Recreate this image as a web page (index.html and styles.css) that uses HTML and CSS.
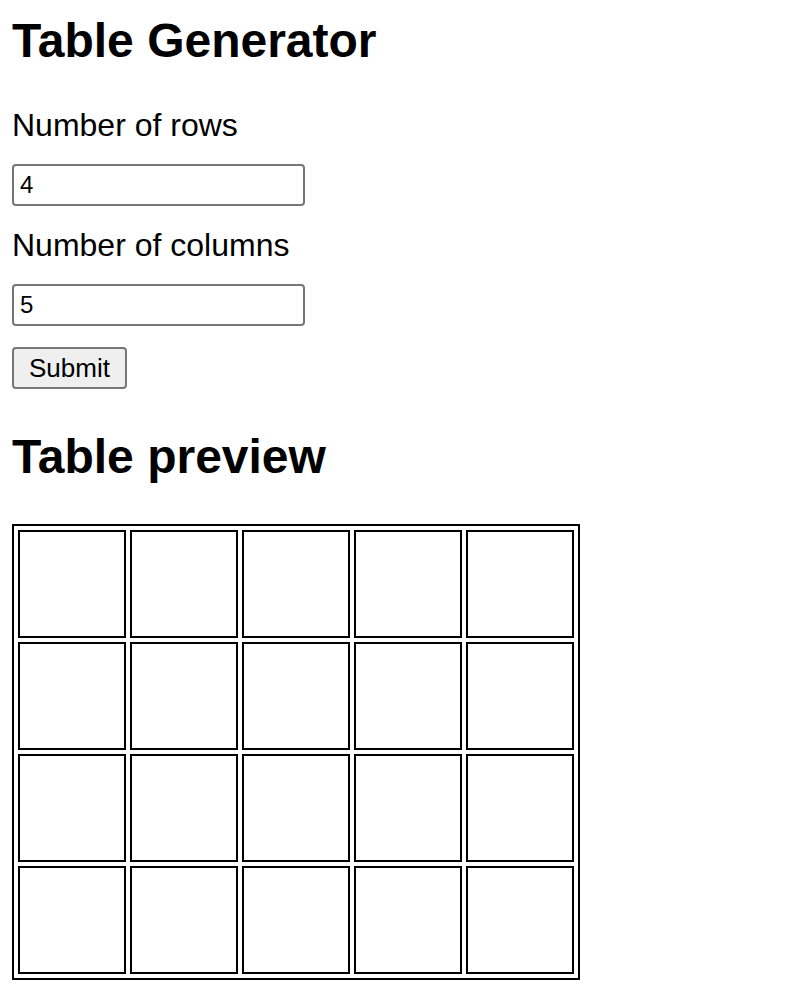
FILE: index.html
```html
<!DOCTYPE html>
<html lang="en">

<head>
<meta charset="UTF-8">
<title>Table Generator</title>
<link rel="stylesheet" href="styles.css">
</head>

<body>

<h1 class="title">Table Generator</h1>

<form class="genform" onsubmit="return false;">
<label for="rows" class="fieldlabel">Number of rows</label>
<input id="rows" type="text" value="4" class="numbox">
<label for="cols" class="fieldlabel">Number of columns</label>
<input id="cols" type="text" value="5" class="numbox">
<button type="submit" class="submitbutton">Submit</button>
</form><!-- genform -->

<h2 class="title previewtitle">Table preview</h2>

<table class="preview">
<tr><td></td><td></td><td></td><td></td><td></td></tr>
<tr><td></td><td></td><td></td><td></td><td></td></tr>
<tr><td></td><td></td><td></td><td></td><td></td></tr>
<tr><td></td><td></td><td></td><td></td><td></td></tr>
</table>

</body>

</html>
```

FILE: styles.css
```css
body {
margin: 0;
padding: 13px 12px 0 12px;
background-color: #fff;
color: #000;
font-family: "Liberation Sans", Arial, Helvetica, sans-serif;
}
.title {
margin: 0 0 38px 0;
font-size: 48px;
line-height: 56px;
font-weight: bold;
}
.previewtitle {
margin: 40px 0 39px 0;
}
.genform {
display: flex;
flex-direction: column;
align-items: flex-start;
gap: 21px;
}
.fieldlabel {
font-size: 32px;
line-height: 36px;
}
.numbox {
box-sizing: border-box;
width: 293px;
height: 42px;
margin: 0;
padding: 0 6px;
border: 2px solid #767676;
border-radius: 4px;
font-family: inherit;
font-size: 24px;
color: #000;
}
.submitbutton {
box-sizing: border-box;
width: 115px;
height: 42px;
margin: 0;
padding: 0;
background-color: #efefef;
border: 2px solid #767676;
border-radius: 4px;
font-family: inherit;
font-size: 26px;
color: #000;
}
.preview {
border: 2px solid #000;
border-spacing: 4px;
}
.preview td {
width: 104px;
height: 104px;
padding: 0;
border: 2px solid #000;
}
```
